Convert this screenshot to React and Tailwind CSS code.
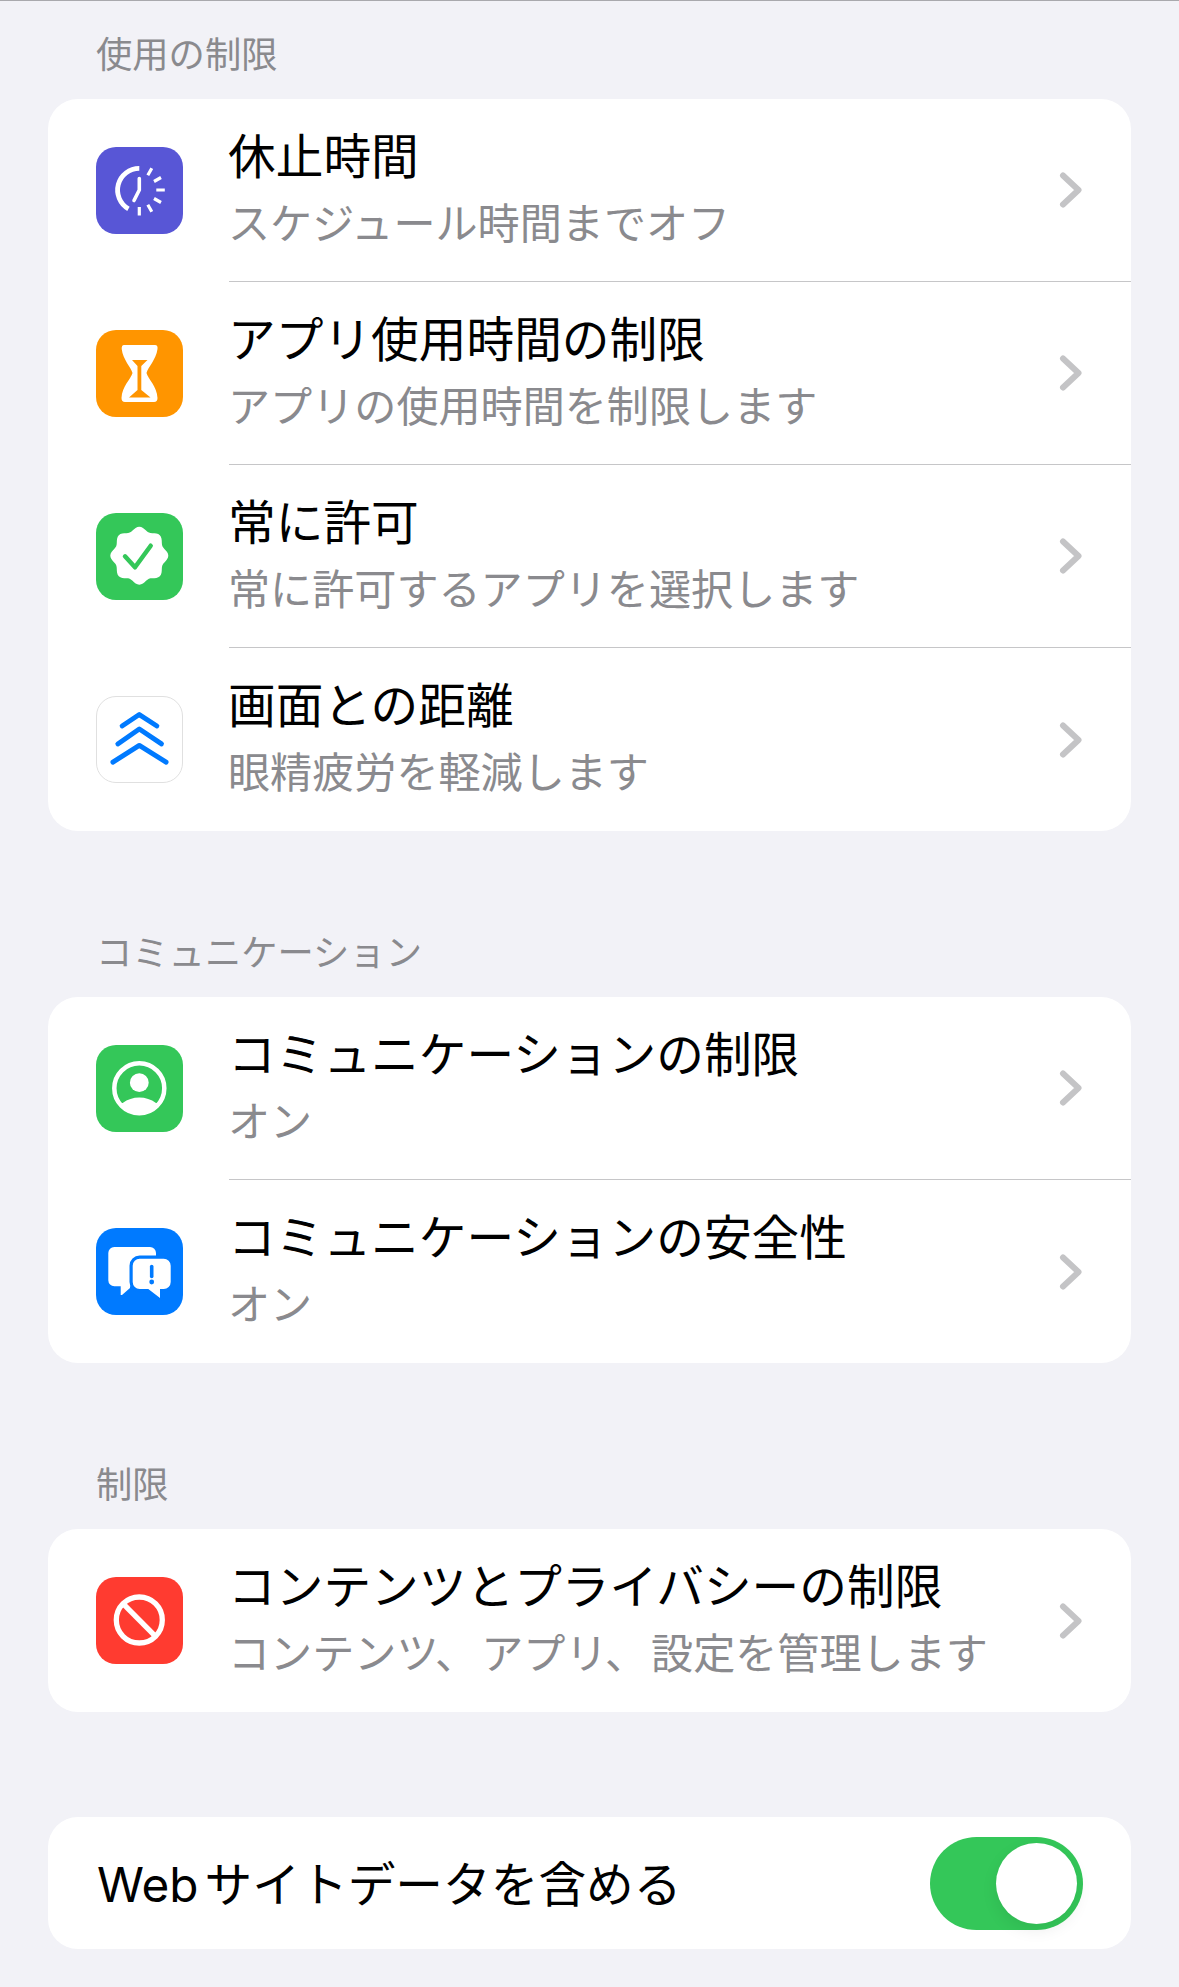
import React from 'react';

const FONT = 'font-["Noto_Sans_CJK_JP",sans-serif] [text-spacing-trim:space-all]';

// scalloped badge outline, eight bumps
const badgePath = () => {
    const pts = [];
    for (let i = 0; i < 96; i++) {
        const a = (i / 96) * Math.PI * 2;
        const r = 27 + 2 * Math.cos(8 * a);
        pts.push(`${(43.3 + r * Math.cos(a)).toFixed(2)} ${(42.7 + r * Math.sin(a)).toFixed(2)}`);
    }
    return `M${pts.join('L')}Z`;
};

const DowntimeIcon = () => (
    <svg viewBox="0 0 87 87" className="w-full h-full" fill="none" stroke="#fff" strokeLinecap="butt">
        <path d="M43.3 21.3A21.7 21.7 0 0 0 32.45 61.8" strokeWidth="4.8" />
        <path d="M43.3 31.5V43L38 53.5" strokeWidth="3.6" strokeLinecap="round" strokeLinejoin="round" />
        <path
            d="M51.8 28.3L55.8 21.3M58 34.5L65 30.5M60.3 43H68.8M58 51.5L65 55.5M51.8 57.7L55.8 64.7M43.3 60V68.5"
            strokeWidth="3.2"
        />
    </svg>
);

const HourglassIcon = () => (
    <svg viewBox="0 0 87 87" className="w-full h-full">
        <path
            fill="#fff"
            d="M28 15H59Q62 15 61.5 19C60 30 52 37 50.5 43C52 49 61 56 61.5 68Q61.5 72 58 72H29Q25.5 72 25.5 68C26 56 35 49 36.5 43C35 37 27 30 25.7 19Q25.5 15 28 15Z"
        />
        <path fill="#ff9500" d="M36 30H51.5L45.3 36V60L54.5 67.5H33L41.5 60V36Z" />
    </svg>
);

const BadgeIcon = () => (
    <svg viewBox="0 0 87 87" className="w-full h-full">
        <path fill="#fff" d={badgePath()} />
        <path
            d="M29 43.3L39 54.3L54.7 32.7"
            fill="none"
            stroke="#34c759"
            strokeWidth="4.5"
            strokeLinecap="round"
            strokeLinejoin="round"
        />
    </svg>
);

const DistanceIcon = () => (
    <svg
        viewBox="0 0 87 87"
        className="w-full h-full"
        fill="none"
        stroke="#007aff"
        strokeWidth="5"
        strokeLinecap="round"
        strokeLinejoin="round"
    >
        <path d="M25.7 29.7L43.3 18L61.3 29.7" />
        <path d="M21.3 48L43.3 32.8L66 48" />
        <path d="M16.3 66.7L43.3 49.5L70.7 66.7" />
    </svg>
);

const PersonIcon = () => (
    <svg viewBox="0 0 87 87" className="w-full h-full">
        <circle cx="43.3" cy="43.3" r="25" fill="none" stroke="#fff" strokeWidth="4.5" />
        <circle cx="43.3" cy="37.7" r="9.4" fill="#fff" />
        <path
            fill="#fff"
            d="M23.1 58H26.7Q34 52.5 43.3 52.5Q52.6 52.5 60 58H63.5A25 25 0 0 1 23.1 58Z"
        />
    </svg>
);

const ChatIcon = () => (
    <svg viewBox="0 0 87 87" className="w-full h-full">
        <path
            fill="#fff"
            d="M18.3 19H54a6 6 0 0 1 6 6V52.3a6 6 0 0 1 -6 6H34V60L26 67H24.7V58.3H18.3a6 6 0 0 1 -6 -6V25a6 6 0 0 1 6 -6Z"
        />
        <path
            fill="#fff"
            stroke="#007aff"
            strokeWidth="6.4"
            paintOrder="stroke"
            strokeLinejoin="round"
            d="M44 30.7H67.7a7 7 0 0 1 7 7V54a7 7 0 0 1 -7 7H64V70L52.3 61H43.7a7 7 0 0 1 -7 -7V37.7a7 7 0 0 1 7 -7Z"
        />
        <path d="M55.7 38.5V48.5" stroke="#007aff" strokeWidth="3.6" strokeLinecap="round" />
        <circle cx="55.7" cy="54" r="2.4" fill="#007aff" />
    </svg>
);

const BlockedIcon = () => (
    <svg viewBox="0 0 87 87" className="w-full h-full" fill="none" stroke="#fff" strokeWidth="5.3">
        <circle cx="43.3" cy="43" r="23" />
        <path d="M27.5 27.2L59 58.8" />
    </svg>
);

const Chevron = () => (
    <svg viewBox="0 0 25 36" className="w-[25px] h-[36px] shrink-0" fill="none">
        <path
            d="M5 3.5L20.5 18L5 32.5"
            stroke="#c4c4c6"
            strokeWidth="6"
            strokeLinecap="round"
            strokeLinejoin="round"
        />
    </svg>
);

const Row = ({ icon, iconClass, title, subtitle, last }) => (
    <div className="flex h-[183px] pl-[48px]">
        <div className={`w-[87px] h-[87px] mt-[48px] rounded-[20px] overflow-hidden shrink-0 ${iconClass}`}>
            {icon}
        </div>
        <div
            className={`flex-1 ml-[46px] pr-[48px] flex items-center justify-between ${
                last ? '' : 'border-b border-[#c6c6c8]'
            }`}
        >
            <div className="flex flex-col -ml-[1px] pb-[6px]">
                <span className="text-[47.7px] leading-[66px] text-black whitespace-nowrap">{title}</span>
                <span className="mt-[1px] text-[42.1px] leading-[66px] text-[#8a8a8e] whitespace-nowrap">
                    {subtitle}
                </span>
            </div>
            <Chevron />
        </div>
    </div>
);

const SectionLabel = ({ className, children }) => (
    <div className={`pl-[96px] text-[36.3px] leading-[46px] text-[#8a8a8e] ${className}`}>{children}</div>
);

export default function App() {
    return (
        <div className={`h-[1987px] overflow-hidden bg-[#f2f2f7] border-t border-[#a9a9ad] ${FONT}`}>
            <SectionLabel className="mt-[28px]">使用の制限</SectionLabel>
            <div className="mx-[48px] mt-[24px] bg-white rounded-[30px] overflow-hidden">
                <Row
                    icon={<DowntimeIcon />}
                    iconClass="bg-[#5856d6]"
                    title="休止時間"
                    subtitle="スケジュール時間までオフ"
                />
                <Row
                    icon={<HourglassIcon />}
                    iconClass="bg-[#ff9500]"
                    title="アプリ使用時間の制限"
                    subtitle="アプリの使用時間を制限します"
                />
                <Row
                    icon={<BadgeIcon />}
                    iconClass="bg-[#34c759]"
                    title="常に許可"
                    subtitle="常に許可するアプリを選択します"
                />
                <Row
                    icon={<DistanceIcon />}
                    iconClass="bg-white border border-[#e0e0e0]"
                    title="画面との距離"
                    subtitle="眼精疲労を軽減します"
                    last
                />
            </div>

            <SectionLabel className="mt-[96px]">コミュニケーション</SectionLabel>
            <div className="mx-[48px] mt-[24px] bg-white rounded-[30px] overflow-hidden">
                <Row
                    icon={<PersonIcon />}
                    iconClass="bg-[#34c759]"
                    title="コミュニケーションの制限"
                    subtitle="オン"
                />
                <Row
                    icon={<ChatIcon />}
                    iconClass="bg-[#007aff]"
                    title="コミュニケーションの安全性"
                    subtitle="オン"
                    last
                />
            </div>

            <SectionLabel className="mt-[96px]">制限</SectionLabel>
            <div className="mx-[48px] mt-[24px] bg-white rounded-[30px] overflow-hidden">
                <Row
                    icon={<BlockedIcon />}
                    iconClass="bg-[#ff3b30]"
                    title="コンテンツとプライバシーの制限"
                    subtitle={
                        <>
                            コンテンツ<span className="mr-[4px]">、</span>アプリ<span className="mr-[4px]">、</span>
                            設定を管理します
                        </>
                    }
                    last
                />
            </div>

            <div className="mx-[48px] mt-[105px] h-[132px] bg-white rounded-[30px] flex items-center justify-between pl-[49px] pr-[48px]">
                <span className="text-[47.7px] text-black whitespace-nowrap pt-[2px]">
                    <span className="font-['Inter'] mr-[6px]">Web</span>サイトデータを含める
                </span>
                <div className="w-[153px] h-[93px] rounded-full bg-[#34c759] flex items-center justify-end pr-[6px]">
                    <div className="w-[81px] h-[81px] rounded-full bg-white shadow-[0_6px_16px_rgba(0,0,0,0.08)]" />
                </div>
            </div>
        </div>
    );
}
